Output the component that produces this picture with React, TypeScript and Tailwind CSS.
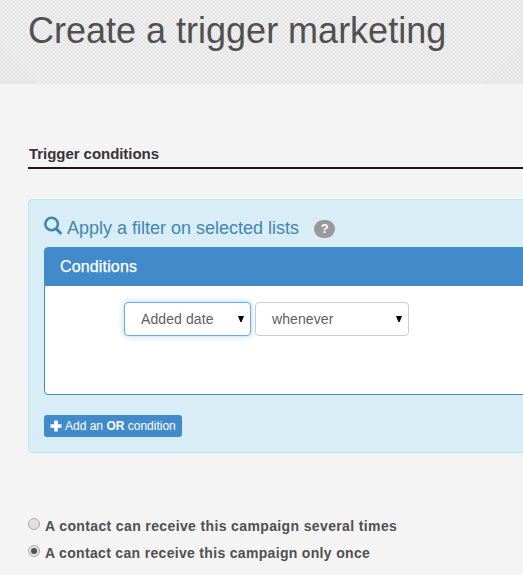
import type { ReactNode } from "react";

function SearchIcon() {
  return (
    <svg width="18" height="19" viewBox="0 0 18 19" fill="none" stroke="#3a87ad" className="mr-[5px] shrink-0">
      <circle cx="7.6" cy="8" r="6.3" strokeWidth="2.5" />
      <path d="M12.2 12.8 L16.4 17" strokeWidth="3" strokeLinecap="round" />
    </svg>
  );
}

function Select({ label, className }: { label: string; className: string }) {
  return (
    <button
      className={`flex h-[34px] items-center rounded border bg-white pl-4 text-left text-[14px] text-[#606060] ${className}`}
    >
      <span className="tracking-[0.1px]">{label}</span>
      <svg width="6" height="6" viewBox="0 0 6 6" className="mr-[6px] ml-auto">
        <path d="M0 0H6L3.6 6H2.4Z" fill="#000" />
      </svg>
    </button>
  );
}

function Radio({ checked, children }: { checked?: boolean; children: ReactNode }) {
  return (
    <label className="flex h-[27px] items-center text-[14px] font-bold text-[#505050]">
      <span className="mr-[5px] mb-[6px] flex size-3 shrink-0 items-center justify-center rounded-full border border-[#aaa] bg-[linear-gradient(#e4e4e4,#dedede)]">
        {checked && <span className="size-[6px] rounded-full bg-[#505050]" />}
      </span>
      <span className="whitespace-nowrap">{children}</span>
    </label>
  );
}

export default function App() {
  return (
    <div className="h-[575px] w-[523px] overflow-hidden bg-[#f4f4f4] font-['Liberation_Sans',Arial,sans-serif]">
      <header className="h-[84px] bg-[#e4e4e4] bg-[repeating-linear-gradient(45deg,rgba(255,255,255,.22)_0_1.4px,transparent_1.4px_2.83px),repeating-linear-gradient(-45deg,rgba(255,255,255,.22)_0_1.4px,transparent_1.4px_2.83px)] pl-7 pt-[11px]">
        <h1 className="whitespace-nowrap text-[36px] leading-10 text-[#505050]">Create a trigger marketing</h1>
      </header>
      <main className="ml-7 pt-[60px]">
        <h2 className="h-[25px] w-[496px] border-b-2 border-[#1b1719] pl-px text-[15px] font-bold leading-5 tracking-[-0.05px] text-[#383338]">
          Trigger conditions
        </h2>
        <section className="mt-[30px] h-[254px] w-[520px] rounded border border-[#bce8f1] bg-[#d9edf7] pl-[15px] pt-[16px]">
          <div className="flex h-[31px] items-start text-[#4286b0]">
            <SearchIcon />
            <h3 className="whitespace-nowrap text-[18px] leading-6">Apply a filter on selected lists</h3>
            <span className="ml-[15px] mt-[4px] flex h-[18px] w-[21px] items-center justify-center rounded-[9px] bg-[#999] text-[13px] font-bold text-white">
              ?
            </span>
          </div>
          <div className="h-[148px] w-[500px] rounded border border-[#428bca] bg-white">
            <h4 className="h-[38px] bg-[#428bca] pl-[15px] text-[16px] leading-[38px] tracking-[0.15px] text-white [-webkit-text-stroke:0.25px_white]">
              Conditions
            </h4>
            <div className="flex gap-1 pl-[79px] pt-4">
              <Select label="Added date" className="w-[127px] border-[#66afe9] shadow-[0_0_6px_rgba(102,175,233,0.55)]" />
              <Select label="whenever" className="w-[154px] border-[#ccc]" />
            </div>
          </div>
          <button className="mt-[20px] flex h-[22px] w-[138px] items-center rounded-[3px] bg-[#428bca] pl-[6px] text-[12px] text-white">
            <svg width="12" height="12" viewBox="0 0 12 12" className="mr-[3px]">
              <path d="M4.2 .5H7.8V4.2H11.5V7.8H7.8V11.5H4.2V7.8H.5V4.2H4.2Z" fill="#fff" />
            </svg>
            <span className="whitespace-nowrap">
              Add an <b>OR</b> condition
            </span>
          </button>
        </section>
        <div className="mt-[60px]">
          <Radio>
            <span className="tracking-[0.37px]">A contact can receive this campaign several times</span>
          </Radio>
          <Radio checked>
            <span className="tracking-[0.32px]">A contact can receive this campaign only once</span>
          </Radio>
        </div>
      </main>
    </div>
  );
}
